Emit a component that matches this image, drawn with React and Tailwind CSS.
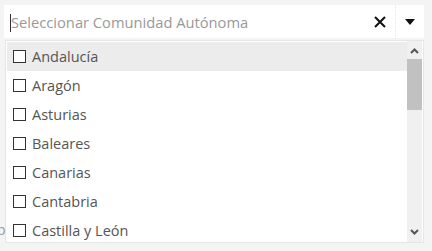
import React from 'react'

const regions = ['Andalucía', 'Aragón', 'Asturias', 'Baleares', 'Canarias', 'Cantabria', 'Castilla y León']

export default function App() {
  return (
    <div className="w-[432px] h-[251px] bg-[#f4f4f4] overflow-hidden relative" style={{ fontFamily: '"Open Sans", sans-serif' }}>
      <span className="absolute left-[-3px] top-[219px] text-[14px] text-[#999]">p</span>
      <div className="pt-[5px] pl-[4px] pr-[8px]">
        <div className="h-[33px] bg-white flex items-center">
          <div className="flex-1 flex items-center pl-[6px] pt-[2px]">
            <span className="w-px h-[18px] bg-[#333]" />
            <span className="text-[14.7px] text-[#999] leading-none">Seleccionar Comunidad Autónoma</span>
          </div>
          <svg width="14" height="14" viewBox="0 0 14 14" className="mr-[8px]">
            <path d="M2 2 L12 12 M12 2 L2 12" stroke="#111" strokeWidth="2" />
          </svg>
          <div className="w-[29px] h-full border-l border-dotted border-[#e4e4e4] flex items-center justify-center">
            <svg width="10" height="6" viewBox="0 0 10 6">
              <path d="M0 0 H10 L5 6 Z" fill="#111" />
            </svg>
          </div>
        </div>
        <div className="mt-[2px] ml-px h-[203px] bg-white border border-[#e6e6e6] flex">
          <div className="flex-1 pt-px pl-px">
            {regions.map((r, i) => (
              <div key={r} className={`h-[29px] flex items-center pl-[6px] ${i === 0 ? 'bg-[#ececec]' : ''}`}>
                <span className="w-[13px] h-[13px] border border-[#333] bg-white" />
                <span className="ml-[6px] text-[14.5px] text-[#555]">{r}</span>
              </div>
            ))}
          </div>
          <div className="w-[15px] mr-px bg-[#f0f0f0] flex flex-col items-center">
            <svg width="9" height="6" viewBox="0 0 9 6" className="mt-[7px] mb-[5px]">
              <path d="M1 5 L4.5 1.5 L8 5" stroke="#555" strokeWidth="2" fill="none" />
            </svg>
            <div className="w-full h-[51px] bg-[#c1c1c1]" />
            <div className="flex-1" />
            <svg width="9" height="6" viewBox="0 0 9 6" className="mb-[7px]">
              <path d="M1 1 L4.5 4.5 L8 1" stroke="#555" strokeWidth="2" fill="none" />
            </svg>
          </div>
        </div>
      </div>
    </div>
  )
}
